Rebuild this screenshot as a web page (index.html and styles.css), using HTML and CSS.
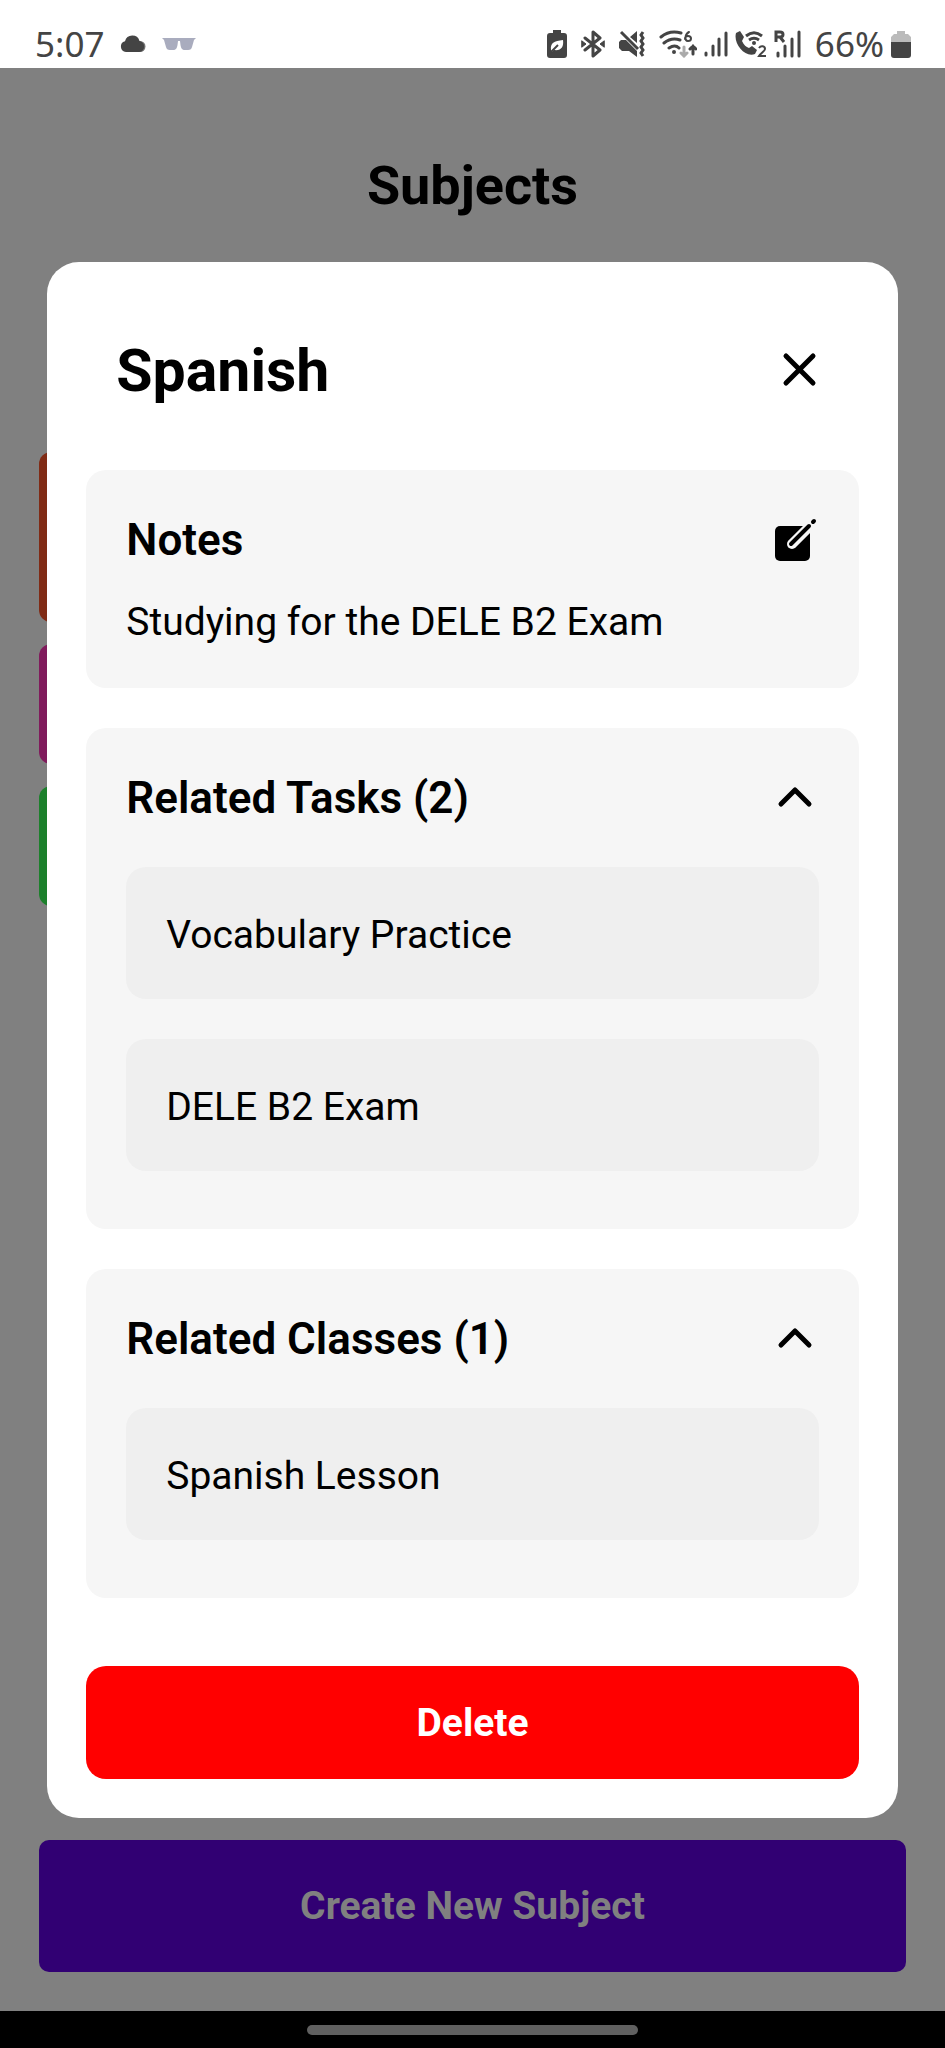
FILE: index.html
```html
<!DOCTYPE html>
<html lang="en">
<head>
<meta charset="utf-8">
<meta name="viewport" content="width=device-width">
<title>Subjects</title>
<link rel="stylesheet" href="styles.css">
</head>
<body>
<div class="screen">
  <header class="status">
    <div class="status-left">
      <span class="clock">5:07</span>
      <svg width="26" height="18" viewBox="0 0 26 18"><path d="M17 17h3a5.500 5.500 0 0 0 0-11h-3z" fill="#777"/><path d="M6 17a5.500 5.500 0 0 1-1-10.800A7.500 7.500 0 0 1 19.500 6 5.500 5.500 0 0 1 18 17z" fill="#444"/></svg>
      <svg width="34" height="12" viewBox="0 0 34 12"><path d="M0 0h34l-2 2-2 7c-.5 2-1.500 3-4 3h-3c-3 0-4-2-4.500-5L18 3h-2l-.5 4c-.5 3-1.500 5-4.500 5H8c-2.500 0-3.500-1-4-3L2 2z" fill="#a9acbe"/></svg>
    </div>
    <div class="status-right">
      <svg width="20" height="28" viewBox="0 0 20 28"><path d="M6 0h8v3h3a3 3 0 0 1 3 3v19a3 3 0 0 1-3 3H3a3 3 0 0 1-3-3V6a3 3 0 0 1 3-3h3z" fill="#444"/><path d="M4 20c-1-7 3-9 12-10 1 7-2 11-9 10l-2 2z" fill="#fff"/><path d="M4 22l7-7" stroke="#444" stroke-width="2"/></svg>
      <svg width="24" height="28" viewBox="0 0 24 28" fill="none" stroke="#444" stroke-width="3" stroke-linejoin="round" stroke-linecap="round"><path d="M4 8l15 12-7 6V2l7 6L4 20"/><path d="M1 11l4 3-4 3zM23 11l-4 3 4 3z" fill="#444" stroke-width="1"/></svg>
      <svg width="26" height="28" viewBox="0 0 26 28"><path d="M2 10h5l11 11v6l-8-6H3l-3-3v-6zM11 7l7-6v12z" fill="#444"/><path d="M2 2l17 17" stroke="#444" stroke-width="3"/><path d="M24 2l-2 3 2 3-2 3 2 3-2 3 2 3-2 3 2 3" fill="none" stroke="#444" stroke-width="3"/></svg>
      <div class="network">
        <svg width="38" height="28" viewBox="0 0 38 28" fill="none" stroke="#444" stroke-width="3" stroke-linecap="round"><path d="M2 7c6-5 13-6 20-4M5 13c5-4 10-5 16-3M10 18c3-2 7-3 10 0"/><circle cx="15" cy="22" r="1" stroke-width="2"/><path stroke="#aaa" d="M25 17v9m-3-3 3 3 3-3"/><path d="M34 24v-8m-3 3 3-3 3 3"/><path d="M30 2c-4 2-5 9-1 9 4 0 4-5 0-5-2 0-3 1-3 3" stroke-width="2"/></svg>
        <svg width="24" height="26" viewBox="0 0 24 26" fill="none" stroke="#444" stroke-width="3" stroke-linecap="round"><path d="M2 22v2M9 15v9M15 8v16M22 2v22"/></svg>
        <svg width="32" height="26" viewBox="0 0 32 26"><path d="M1 2l4-2 4 6-2 4c2 4 4 6 7 7l3-2 5 4-2 4C10 27-2 13 1 2z" fill="#444"/><path d="M11 5c5-4 11-4 16 0M14 9c3-2 7-2 10 0" fill="none" stroke="#444" stroke-width="3"/><circle cx="19" cy="12" r="2" fill="#444"/><path d="M24 17c2-3 6-2 6 1 0 2-4 4-6 7h7" fill="none" stroke="#444" stroke-width="2"/></svg>
        <svg width="27" height="28" viewBox="0 0 27 28" fill="none" stroke="#444" stroke-width="3"><path d="M2 12V2h4c4 0 4 5 0 5H2m4 0 4 5"/><path d="M4 23v3M11 16v10M18 9v17M25 2v24" stroke-linecap="round"/></svg>
      </div>
      <div class="charge">
        <span class="percent">66%</span>
        <svg width="20" height="28" viewBox="0 0 20 28"><path d="M6 1h8v3h3l3 3v6H0V7l3-3h3z" fill="#bbb"/><path d="M0 12h20v13a3 3 0 0 1-3 3H3a3 3 0 0 1-3-3z" fill="#444"/></svg>
      </div>
    </div>
  </header>

  <main class="app">
    <h1 class="page-title">Subjects</h1>
    <div class="subjects">
      <div class="subject subject-tall rust"></div>
      <div class="subject magenta"></div>
      <div class="subject green"></div>
    </div>
    <button class="create" type="button">Create New Subject</button>

    <section class="modal" role="dialog" aria-labelledby="modal-title">
      <div class="modal-head">
        <h2 class="modal-title" id="modal-title">Spanish</h2>
        <button class="icon-button" type="button" aria-label="Close"><svg width="40" height="40" viewBox="0 0 40 40" fill="none" stroke="#000" stroke-width="5" stroke-linecap="round"><path d="M6 5l27 27M33 5L6 32"/></svg></button>
      </div>
      <section class="card">
        <div class="card-head">
          <h3 class="card-title">Notes</h3>
          <button class="icon-button" type="button" aria-label="Edit notes"><svg width="48" height="48" viewBox="0 0 48 48"><rect x="4" y="10" width="35" height="35" rx="5"/><path d="M39 10L21 28" stroke="#f6f6f6" stroke-width="10" stroke-linecap="round"/><path d="M38 10L20 28" stroke="#000" stroke-width="4" stroke-linecap="round"/><path d="M42 6l1-1" stroke="#000" stroke-width="4" stroke-linecap="round"/></svg></button>
        </div>
        <p class="note">Studying for the DELE B2 Exam</p>
      </section>
      <section class="card">
        <div class="card-head">
          <h3 class="card-title">Related Tasks (2)</h3>
          <button class="icon-button" type="button" aria-label="Collapse tasks"><svg width="48" height="48" viewBox="0 0 48 48" fill="none" stroke="#000" stroke-width="5" stroke-linecap="round" stroke-linejoin="round"><path d="M10 30l14-14 14 14"/></svg></button>
        </div>
        <ul class="items"><li class="item">Vocabulary Practice</li><li class="item">DELE B2 Exam</li></ul>
      </section>
      <section class="card">
        <div class="card-head">
          <h3 class="card-title">Related Classes (1)</h3>
          <button class="icon-button" type="button" aria-label="Collapse classes"><svg width="48" height="48" viewBox="0 0 48 48" fill="none" stroke="#000" stroke-width="5" stroke-linecap="round" stroke-linejoin="round"><path d="M10 30l14-14 14 14"/></svg></button>
        </div>
        <ul class="items"><li class="item">Spanish Lesson</li></ul>
      </section>
      <button class="delete" type="button">Delete</button>
    </section>
  </main>
  <footer class="navbar"><div class="handle"></div></footer>
</div>
</body>
</html>
```

FILE: styles.css
```css
* { box-sizing: border-box; }
body { margin: 0; font-family: Roboto, "Liberation Sans", sans-serif; color: #000; }
h1, h2, h3, p, ul { margin: 0; padding: 0; }
button { border: 0; padding: 0; font: inherit; }
svg { display: block; flex: none; }

.screen { min-height: 100vh; display: flex; flex-direction: column; background: #fff; }

.status { height: 68px; padding: 20px 34px 0 35px; display: flex; justify-content: space-between; color: #444; }
.status-left, .status-right { display: flex; align-items: center; height: 48px; }
.status-left { gap: 16px; }
.status-right { gap: 14px; }
.network, .charge { display: flex; align-items: center; gap: 7px; }
.clock, .percent { font-family: "Noto Sans", sans-serif; font-size: 35px; line-height: 48px; }

.app { position: relative; flex: 1; background: #808080; padding: 86px 39px 39px; display: flex; flex-direction: column; }
.page-title { font-size: 54px; line-height: 64px; font-weight: 700; text-align: center; }
.subjects { flex: 1; display: flex; flex-direction: column; gap: 22px; padding-top: 234px; }
.subject { height: 120px; border-radius: 12px; border-left: 20px solid; }
.subject-tall { height: 170px; }
.rust { border-color: #802b15; }
.magenta { border-color: #801b5c; }
.green { border-color: #1c802b; }
.create { height: 132px; border-radius: 10px; background: #310073; color: #808080; font-size: 39px; font-weight: 700; }

.modal { position: absolute; top: 194px; left: 5%; right: 5%; padding: 40px 39px 39px; border-radius: 32px; background: #fff; display: flex; flex-direction: column; gap: 40px; }
.modal-head { display: flex; align-items: center; justify-content: space-between; padding: 10px 39px 0 30px; height: 128px; }
.modal-title { font-size: 59px; line-height: 72px; font-weight: 700; }
.icon-button { background: none; }
.card { background: #f6f6f6; border-radius: 20px; padding: 40px; }
.card-head { display: flex; align-items: center; justify-content: space-between; height: 60px; }
.card-title { font-size: 44px; line-height: 60px; font-weight: 600; }
.note { font-size: 39px; line-height: 52px; padding-top: 26px; }
.items { list-style: none; display: flex; flex-direction: column; gap: 40px; padding: 39px 0 18px; }
.item { font-size: 39px; line-height: 52px; padding: 42px 40px 38px; border-radius: 20px; background: #efefef; }
.delete { height: 113px; margin-top: 28px; border-radius: 20px; background: #f00; color: #fff; font-size: 39px; font-weight: 700; }

.navbar { height: 37px; background: #000; display: flex; align-items: center; justify-content: center; }
.handle { width: 35%; height: 10px; border-radius: 5px; background: #606060; }
```
